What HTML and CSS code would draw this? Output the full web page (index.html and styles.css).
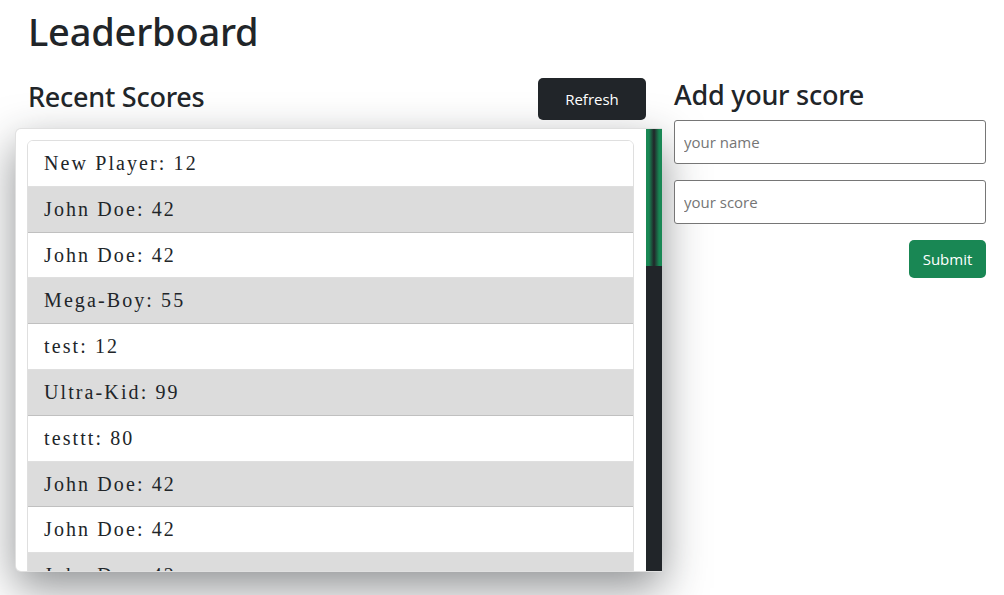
FILE: index.html
```html
<!DOCTYPE html>
<html lang="en">
<head>
<meta charset="utf-8">
<title>Leaderboard</title>
<link rel="stylesheet" href="styles.css">
</head>
<body>
<main class="page">
  <h1 class="title">Leaderboard</h1>
  <div class="layout">
    <section class="scores">
      <div class="scores-head">
        <h2 class="heading">Recent Scores</h2>
        <button class="btn btn-dark" type="button">Refresh</button>
      </div>
      <div class="card">
        <div class="card-body">
          <ul class="list">
            <li class="item">New Player: 12</li>
            <li class="item">John Doe: 42</li>
            <li class="item">John Doe: 42</li>
            <li class="item">Mega-Boy: 55</li>
            <li class="item">test: 12</li>
            <li class="item">Ultra-Kid: 99</li>
            <li class="item">testtt: 80</li>
            <li class="item">John Doe: 42</li>
            <li class="item">John Doe: 42</li>
            <li class="item">John Doe: 42</li>
            <li class="item">John Doe: 42</li>
            <li class="item">Mega-Boy: 55</li>
            <li class="item">Ultra-Kid: 99</li>
            <li class="item">John Doe: 42</li>
            <li class="item">test: 12</li>
            <li class="item">John Doe: 42</li>
          </ul>
        </div>
        <div class="scrollbar" aria-hidden="true">
          <div class="scrollbar-thumb"></div>
        </div>
      </div>
    </section>
    <section class="add">
      <h2 class="heading">Add your score</h2>
      <form class="form">
        <input class="field" type="text" placeholder="your name">
        <input class="field" type="text" placeholder="your score">
        <div class="actions">
          <button class="btn btn-success" type="button">Submit</button>
        </div>
      </form>
    </section>
  </div>
</main>
</body>
</html>
```

FILE: styles.css
```css
* { box-sizing: border-box; }

html, body {
  margin: 0;
  background: #fff;
}

body {
  font-family: "Open Sans", "Noto Sans", sans-serif;
  color: #212529;
}

.page {
  padding: 8px 18px 40px 15px;
}

.title {
  margin: 0 0 0 13px;
  font-family: "Noto Sans", "Open Sans", sans-serif;
  font-size: 38px;
  line-height: 46px;
  font-weight: 500;
  letter-spacing: -0.2px;
}

.layout {
  display: flex;
  gap: 12px;
  margin-top: 24px;
  align-items: flex-start;
}

.scores {
  width: 647px;
  flex: none;
}

.scores-head {
  display: flex;
  justify-content: space-between;
  align-items: center;
  height: 42px;
  padding: 0 16px 0 13px;
}

.scores-head .heading {
  margin-bottom: 4px;
}

.heading {
  margin: 0;
  font-family: "Noto Sans", "Open Sans", sans-serif;
  font-size: 27px;
  line-height: 34px;
  font-weight: 500;
  letter-spacing: -0.25px;
}

.btn {
  border: 0;
  border-radius: 5px;
  font-family: inherit;
  font-size: 15px;
  color: #fff;
  cursor: pointer;
}

.btn-dark {
  width: 108px;
  height: 42px;
  background: #212529;
}

.btn-success {
  width: 77px;
  height: 38px;
  background: #198754;
}

.card {
  display: flex;
  margin-top: 8px;
  height: 444px;
  border: 1px solid rgba(0, 0, 0, 0.12);
  border-right: 0;
  border-radius: 6px 0 0 6px;
  background: #fff;
  box-shadow: 0 16px 44px rgba(33, 37, 41, 0.5);
  overflow: hidden;
}

.card-body {
  flex: 1;
  overflow: hidden;
  padding: 11px 12px 0 11px;
}

.scrollbar {
  flex: none;
  width: 16px;
  background: #212529;
}

.scrollbar-thumb {
  height: 137px;
  background: linear-gradient(to right, #198754 0%, #198754 18%, #212529 50%, #198754 82%, #198754 100%);
}

.list {
  list-style: none;
  margin: 0;
  padding: 0;
  border: 1px solid rgba(0, 0, 0, 0.125);
  border-radius: 6px;
  overflow: hidden;
}

.item {
  padding: 8px 16px;
  font-family: "Liberation Serif", "DejaVu Serif", serif;
  font-size: 20px;
  line-height: 28.8px;
  letter-spacing: 2.1px;
  color: #212529;
  border-bottom: 1px solid rgba(0, 0, 0, 0.125);
  background: #fff;
}

.item:nth-child(even) {
  background: #dcdcdc;
}

.add {
  width: 312px;
  flex: none;
}

.add .heading {
  margin-bottom: 8px;
}

.form {
  display: flex;
  flex-direction: column;
  gap: 16px;
}

.field {
  height: 44px;
  width: 100%;
  border: 1px solid #767676;
  border-radius: 3px;
  padding: 0 9px;
  font-family: inherit;
  font-size: 15px;
  color: #212529;
}

.field::placeholder {
  color: #757575;
}

.actions {
  display: flex;
  justify-content: flex-end;
}
```
